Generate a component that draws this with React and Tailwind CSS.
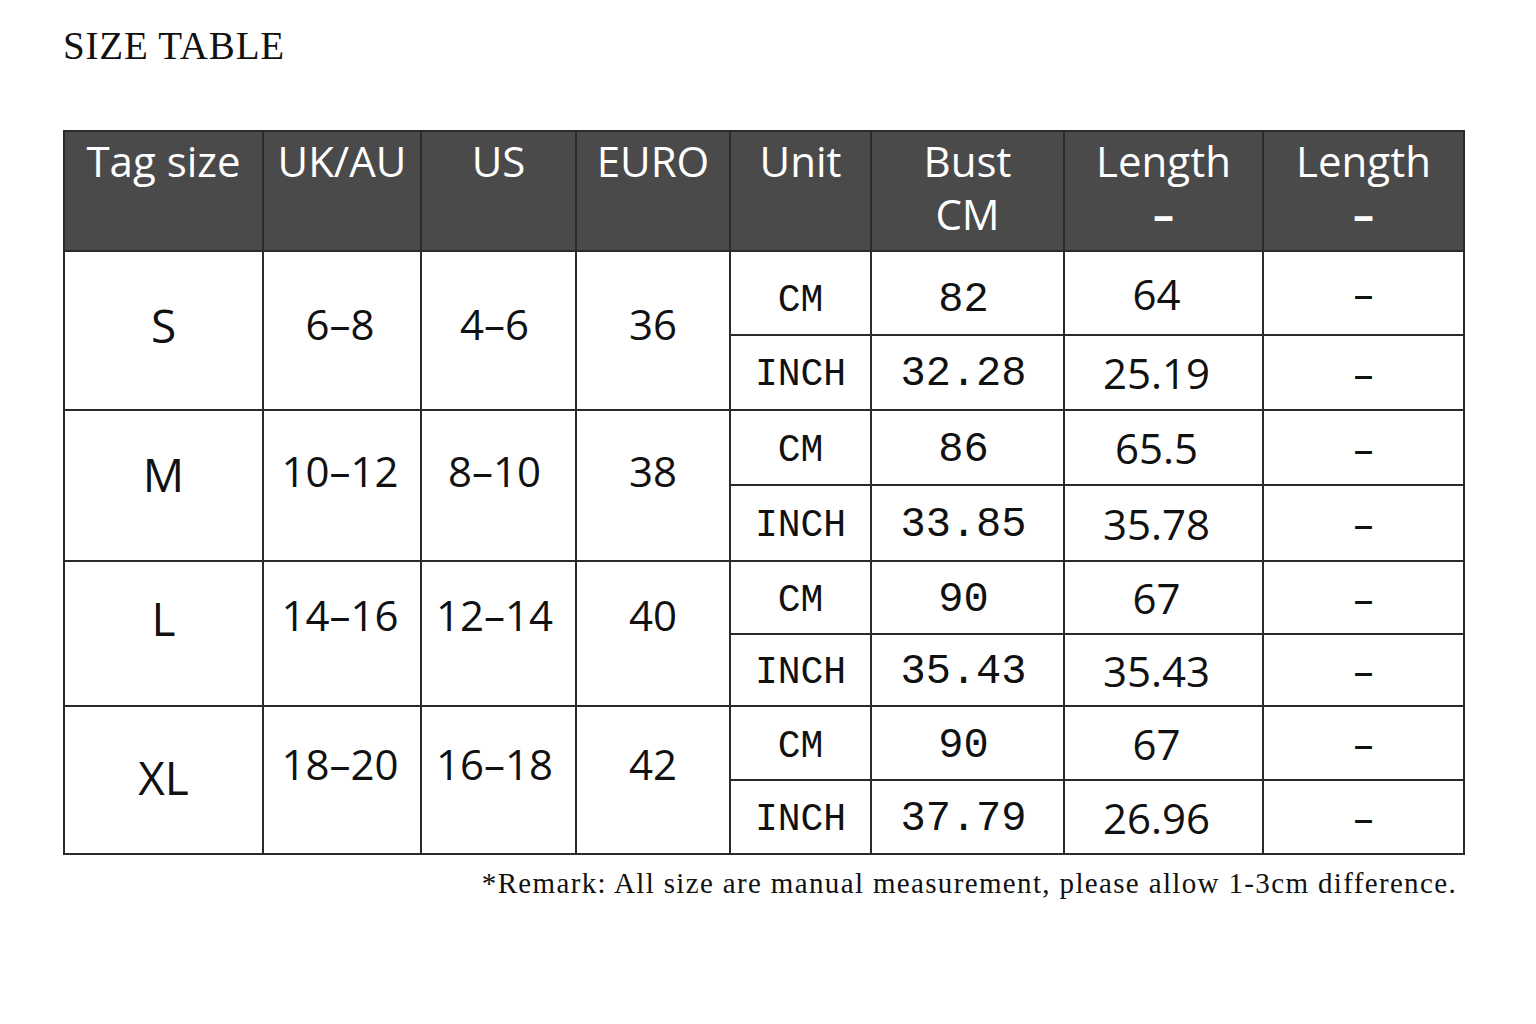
import React from "react";

const rows = [
  { tag: "S", uk: "6–8", us: "4–6", eu: "36", tagPb: "pb-[10px]", pb: "pb-[14px]", cmPt: "pt-[14px]",
    cm: ["82", "64"], inch: ["32.28", "25.19"] },
  { tag: "M", uk: "10–12", us: "8–10", eu: "38", tagPb: "pb-[22px]", pb: "pb-[30px]", cmPt: "pt-[6px]",
    cm: ["86", "65.5"], inch: ["33.85", "35.78"] },
  { tag: "L", uk: "14–16", us: "12–14", eu: "40", tagPb: "pb-[30px]", pb: "pb-[38px]", cmPt: "pt-[6px]",
    cm: ["90", "67"], inch: ["35.43", "35.43"] },
  { tag: "XL", uk: "18–20", us: "16–18", eu: "42", tagPb: "pb-[6px]", pb: "pb-[34px]", cmPt: "pt-[6px]",
    cm: ["90", "67"], inch: ["37.79", "26.96"] },
];

const rowStarts = ["row-start-2", "row-start-4", "row-start-6", "row-start-8"];
const rowStartsB = ["row-start-3", "row-start-5", "row-start-7", "row-start-9"];

const sans = "font-['Open_Sans','Noto_Sans',sans-serif]";
const mono = "font-['Liberation_Mono','DejaVu_Sans_Mono',monospace]";

function Head({ children }) {
  return (
    <div className="bg-[#4a4a4a] text-white text-[42px] leading-[53px] text-center pt-[2px] font-['Open_Sans','Noto_Sans',sans-serif]">
      {children}
    </div>
  );
}

function Cell({ className, children }) {
  return (
    <div className={`bg-white flex items-center justify-center ${className}`}>
      {children}
    </div>
  );
}

export default function App() {
  return (
    <div className="bg-white w-[1536px] h-[1024px] pl-[63px] pt-[26px] text-[#111]">
      <div className="text-[39px] leading-none tracking-[0.8px] text-[#111] font-['Liberation_Serif','Times_New_Roman',serif]">
        SIZE TABLE
      </div>
      <div className="mt-[65px] w-[1402px] grid grid-cols-[197px_156px_153px_152px_139px_191px_197px_199px] grid-rows-[118px_82px_73px_73px_74px_71px_70px_72px_72px] gap-[2px] p-[2px] bg-[#2b2b2b]">
        <Head>Tag size</Head>
        <Head>UK/AU</Head>
        <Head>US</Head>
        <Head>EURO</Head>
        <Head>Unit</Head>
        <Head>
          <div>Bust</div>
          <div>CM</div>
        </Head>
        <Head>
          <div>Length</div>
          <div className="font-bold">–</div>
        </Head>
        <Head>
          <div>Length</div>
          <div className="font-bold">–</div>
        </Head>

        {rows.map((r, i) => (
          <React.Fragment key={r.tag}>
            <Cell className={`${rowStarts[i]} row-span-2 col-start-1 text-[46px] ${sans} ${r.tagPb}`}>
              {r.tag}
            </Cell>
            <Cell className={`${rowStarts[i]} row-span-2 col-start-2 text-[42px] pr-[4px] ${sans} ${r.pb}`}>
              {r.uk}
            </Cell>
            <Cell className={`${rowStarts[i]} row-span-2 col-start-3 text-[42px] pr-[8px] ${sans} ${r.pb}`}>
              {r.us}
            </Cell>
            <Cell className={`${rowStarts[i]} row-span-2 col-start-4 text-[42px] ${sans} ${r.pb}`}>
              {r.eu}
            </Cell>

            <Cell className={`${rowStarts[i]} col-start-5 text-[38px] ${mono} ${r.cmPt}`}>CM</Cell>
            <Cell className={`${rowStarts[i]} col-start-6 text-[42px] pr-[8px] ${mono} ${r.cmPt}`}>{r.cm[0]}</Cell>
            <Cell className={`${rowStarts[i]} col-start-7 text-[42px] pr-[14px] ${sans}`}>{r.cm[1]}</Cell>
            <Cell className={`${rowStarts[i]} col-start-8 text-[40px] ${sans}`}>–</Cell>

            <Cell className={`${rowStartsB[i]} col-start-5 text-[38px] ${mono} pt-[4px]`}>INCH</Cell>
            <Cell className={`${rowStartsB[i]} col-start-6 text-[42px] pr-[8px] ${mono} pt-[4px]`}>{r.inch[0]}</Cell>
            <Cell className={`${rowStartsB[i]} col-start-7 text-[42px] pr-[14px] ${sans}`}>{r.inch[1]}</Cell>
            <Cell className={`${rowStartsB[i]} col-start-8 text-[40px] ${sans}`}>–</Cell>
          </React.Fragment>
        ))}
      </div>
      <div className="w-[1402px] flex justify-end pr-[8px] mt-[14px]">
        <div className="text-[29px] leading-none tracking-[1.35px] font-['Liberation_Serif','Times_New_Roman',serif]">
          *Remark: All size are manual measurement, please allow 1-3cm difference.
        </div>
      </div>
    </div>
  );
}
